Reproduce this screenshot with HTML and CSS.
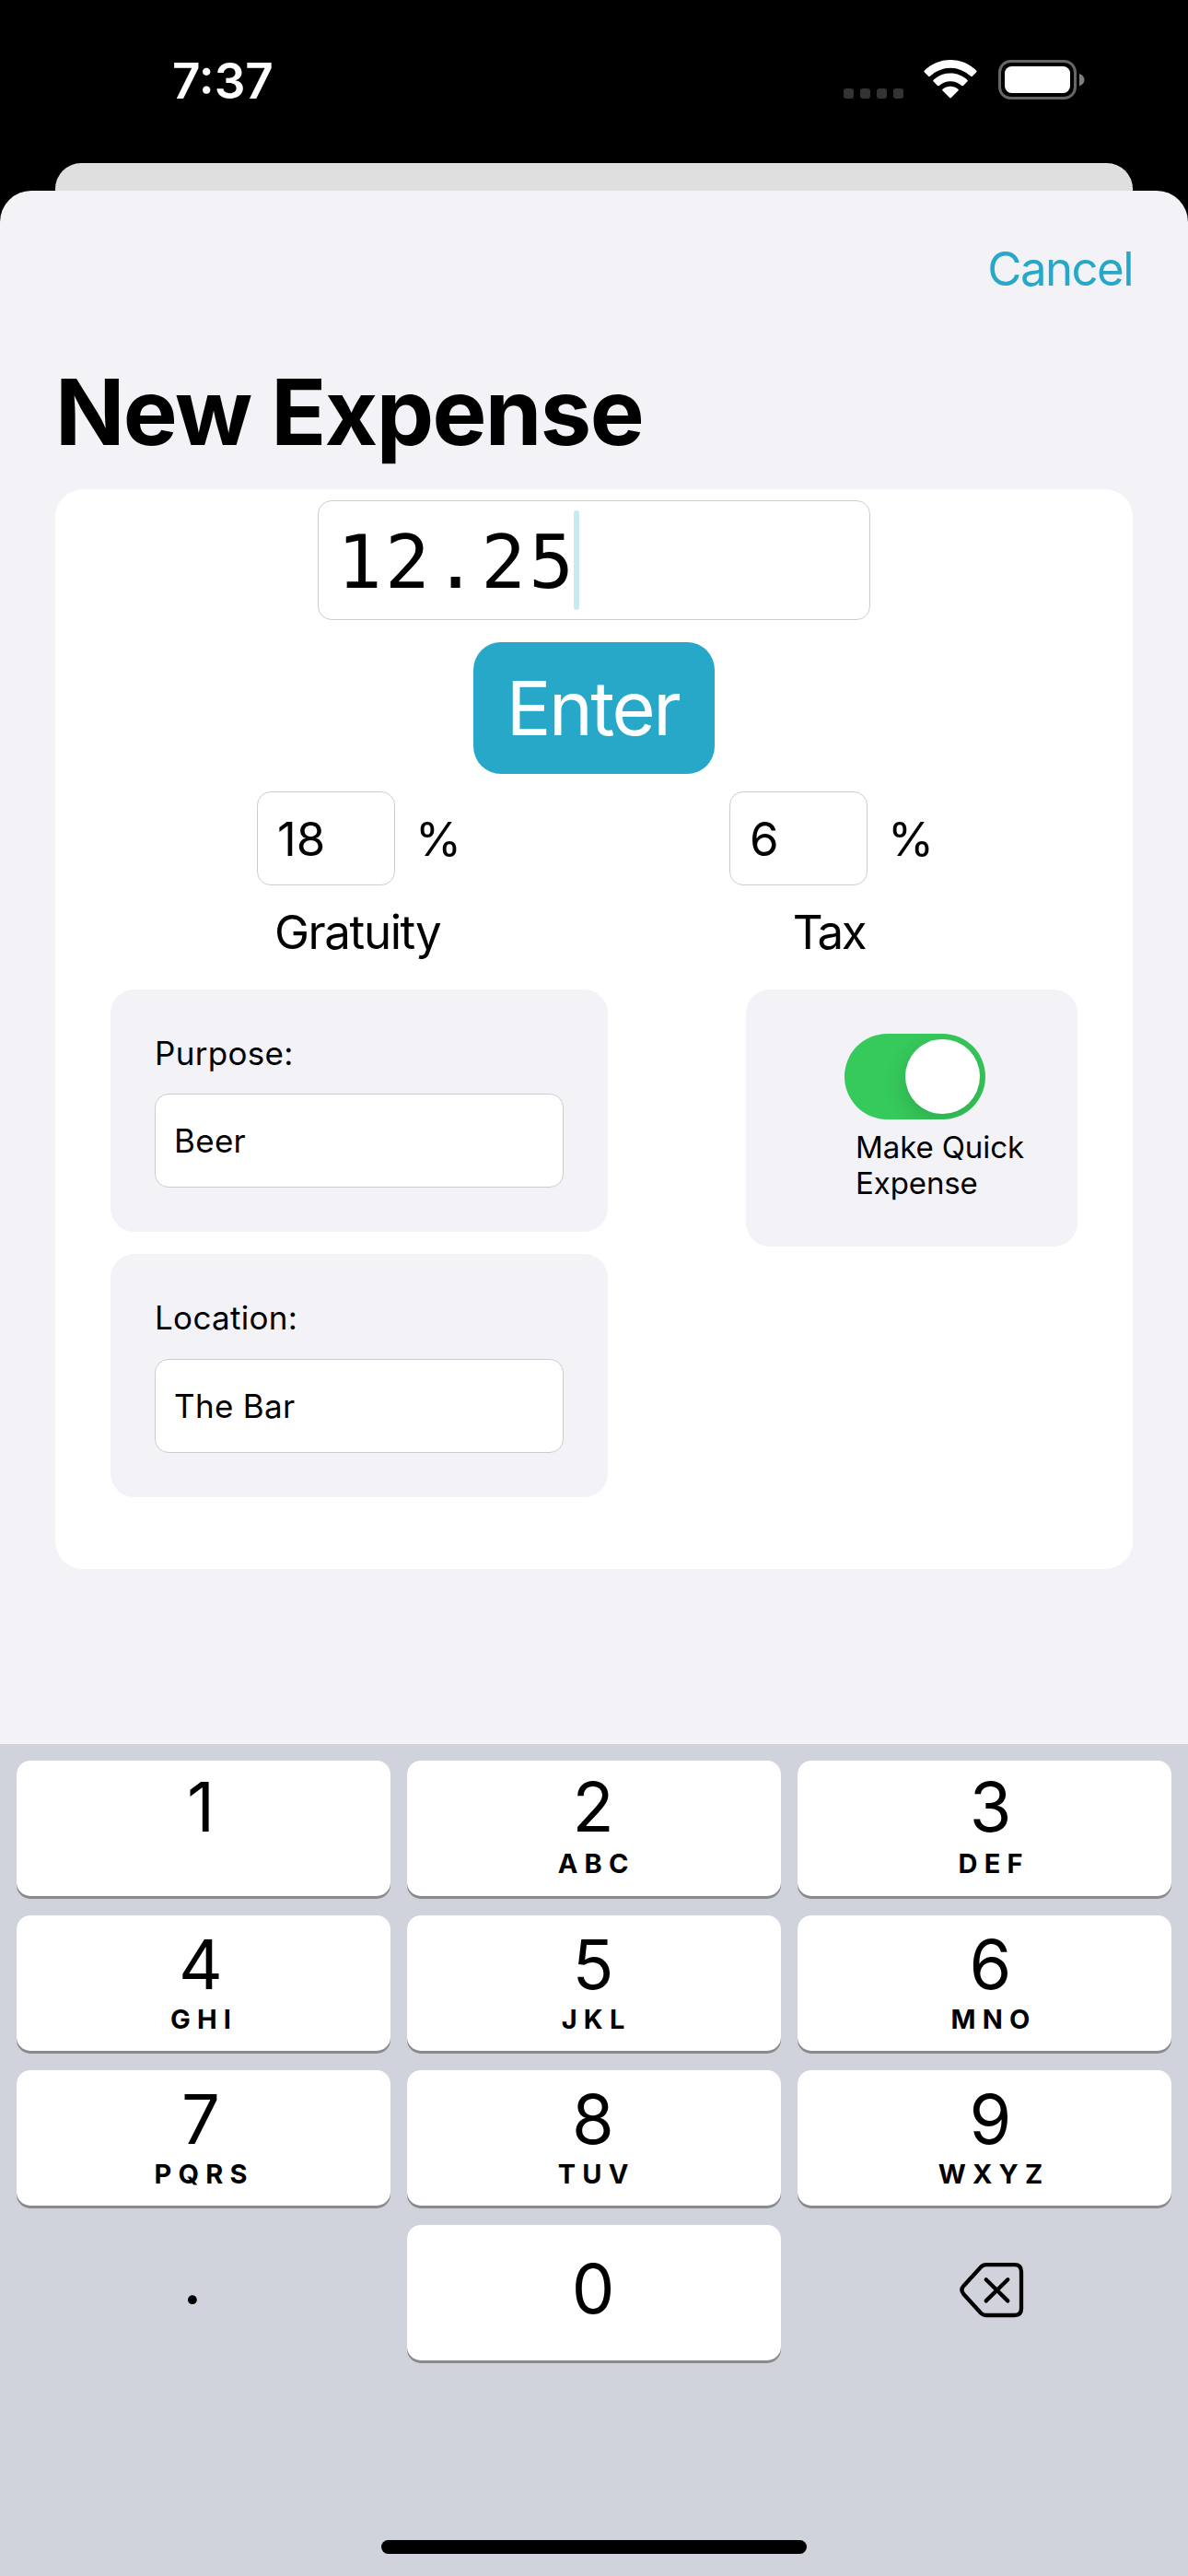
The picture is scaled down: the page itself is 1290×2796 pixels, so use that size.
FILE: index.html
```html
<!DOCTYPE html>
<html lang="en">
<head>
<meta charset="utf-8">
<title>New Expense</title>
<link rel="stylesheet" href="styles.css">
</head>
<body>
<div class="screen">
  <header class="status">
    <div class="time">7:37</div>
    <div class="indicators">
      <div class="dots"><i></i><i></i><i></i><i></i></div>
      <svg class="wifi" width="58" height="42" viewBox="0 0 58 42" fill="#fff">
        <path d="M29 0C40 0 50 4.400 57.100 11.500a1.300 1.300 0 0 1 0 1.900L52.800 17.700a1.200 1.200 0 0 1-1.700 0A32 32 0 0 0 6.900 17.700a1.200 1.200 0 0 1-1.700 0L.9 13.400a1.300 1.300 0 0 1 0-1.900C8 4.400 18 0 29 0Z"/>
        <path d="M29 14.500c7 0 13.500 2.700 18.300 7.200a1.300 1.300 0 0 1 0 1.900L43 27.900a1.300 1.300 0 0 1-1.800 0 18 18 0 0 0-24.400 0 1.300 1.300 0 0 1-1.800 0l-4.300-4.300a1.300 1.300 0 0 1 0-1.900A26.700 26.700 0 0 1 29 14.500Z"/>
        <path d="M29 28.700c3.200 0 6.100 1.100 8.400 3a1.300 1.300 0 0 1 0 1.900l-7.500 7.500a1.300 1.300 0 0 1-1.800 0l-7.500-7.500a1.300 1.300 0 0 1 0-1.900c2.300-1.900 5.200-3 8.400-3Z"/>
      </svg>
      <svg class="battery" width="94" height="43" viewBox="0 0 94 43">
        <rect x="1.500" y="1.500" width="82" height="40" rx="12" fill="none" stroke="#666" stroke-width="3"/>
        <rect x="7" y="7" width="71" height="29" rx="7.500" fill="#fff"/>
        <path d="M88 15c3.500 1.300 5.500 3.800 5.500 6.700S91.500 27.100 88 28.500Z" fill="#808080"/>
      </svg>
    </div>
  </header>
  <div class="back-sheet"></div>
  <main class="sheet">
    <nav class="nav"><a class="cancel">Cancel</a></nav>
    <h1 class="title">New Expense</h1>
    <section class="card">
      <div class="field amount"><span class="value">12.25</span><i class="caret"></i></div>
      <button class="enter">Enter</button>
      <div class="rates">
        <div class="rate">
          <div class="rate-row"><div class="field pct">18</div><span class="sign">%</span></div>
          <div class="rate-name gratuity">Gratuity</div>
        </div>
        <div class="rate">
          <div class="rate-row"><div class="field pct">6</div><span class="sign">%</span></div>
          <div class="rate-name tax">Tax</div>
        </div>
      </div>
      <div class="details">
        <div class="texts">
          <div class="panel"><label class="label">Purpose:</label><div class="field entry">Beer</div></div>
          <div class="panel location"><label class="label">Location:</label><div class="field entry">The Bar</div></div>
        </div>
        <div class="panel quick">
          <div class="toggle"><i class="knob"></i></div>
          <div class="quick-name">Make Quick<br>Expense</div>
        </div>
      </div>
    </section>
  </main>
  <footer class="keyboard">
    <div class="keys">
      <div class="key first"><b>1</b></div>
      <div class="key first"><b>2</b><small>ABC</small></div>
      <div class="key first"><b>3</b><small>DEF</small></div>
      <div class="key"><b>4</b><small>GHI</small></div>
      <div class="key"><b>5</b><small>JKL</small></div>
      <div class="key"><b>6</b><small>MNO</small></div>
      <div class="key"><b>7</b><small>PQRS</small></div>
      <div class="key"><b>8</b><small>TUV</small></div>
      <div class="key"><b>9</b><small>WXYZ</small></div>
      <div class="key plain point"><b>.</b></div>
      <div class="key zero"><b>0</b></div>
      <div class="key plain del">
        <svg width="70" height="60" viewBox="0 0 70 60" fill="none" stroke="#000" stroke-width="4.300" stroke-linecap="round" stroke-linejoin="round">
          <path d="M29 2.200H59.500Q67 2.200 67 9.700V49.500Q67 57 59.500 57H29Q25.500 57 23 54.500L4.300 34Q.5 29.600 4.300 25.200L23 4.700Q25.500 2.200 29 2.200Z"/>
          <path d="M28.700 18.200L52.300 41.400M52.300 18.200L28.700 41.400"/>
        </svg>
      </div>
    </div>
    <div class="home"></div>
  </footer>
</div>
</body>
</html>
```
FILE: styles.css
```css
* { box-sizing: border-box; }
body { margin: 0; background: #000; font-family: Inter, "Liberation Sans", sans-serif; color: #000; }
.screen { width: 1290px; height: 2796px; display: flex; flex-direction: column; overflow: hidden; }
.status { height: 177px; display: flex; justify-content: space-between; padding: 0 112px 0 187px; color: #fff; }
.time { font-size: 53px; line-height: 60px; font-weight: 600; margin-top: 58px; letter-spacing: 0; }
.indicators { display: flex; align-items: flex-start; padding-top: 65px; }
.dots { display: flex; gap: 7px; margin: 31px 22px 0 0; }
.dots i { width: 11px; height: 11px; border-radius: 3px; background: #333; }
.wifi { margin-right: 23px; }
.back-sheet { height: 30px; margin: 0 60px; background: #dfdfdf; border-radius: 28px 28px 0 0; }
.sheet { height: 1686px; flex: none; background: #f2f2f7; border-radius: 34px 34px 0 0; padding: 0 60px; }
.nav { display: flex; justify-content: flex-end; padding-top: 55px; }
.cancel { font-size: 51px; line-height: 60px; color: #27a8c8; letter-spacing: -1.6px; }
.title { margin: 65px 0 0; font-size: 99px; line-height: 120px; height: 144px; font-weight: 700; letter-spacing: -1.6px; }
.card { height: 1172px; background: #fff; border-radius: 30px; display: flex; flex-direction: column; align-items: center; padding-top: 12px; }
.field { background: #fff; border: 1px solid #cdcdcf; border-radius: 15px; display: flex; align-items: center; }
.amount { width: 600px; height: 130px; padding-left: 20px; font-family: "DejaVu Sans Mono", monospace; font-size: 81px; letter-spacing: 3.3px; }
.value { padding-top: 3px; margin-right: -3px; }
.caret { width: 6px; height: 108px; border-radius: 3px; background: #c8ebf1; }
.enter { margin-top: 24px; width: 262px; height: 143px; border: 0; border-radius: 30px; background: #27a8c8; color: #fff; font: 400 81px/100px Inter, sans-serif; letter-spacing: -2.5px; padding: 0 3px 0 0; }
.rates { width: 1170px; display: flex; justify-content: space-between; padding: 19px 216px 0 219px; height: 234px; }
.rate { display: flex; flex-direction: column; align-items: center; }
.rate-row { display: flex; align-items: center; gap: 22px; font-size: 51px; }
.pct { width: 150px; height: 102px; padding-left: 21px; letter-spacing: 0; }
.rate-name { margin-top: 21px; font-size: 51px; line-height: 60px; letter-spacing: -1.4px; padding-right: 4px; }
.rate-name.tax { letter-spacing: -2.4px; padding-right: 6px; }
.details { width: 1170px; padding: 0 60px; display: flex; justify-content: space-between; align-items: flex-start; }
.texts { display: flex; flex-direction: column; gap: 24px; }
.panel { background: #f2f2f7; border-radius: 26px; }
.texts .panel { width: 540px; height: 263px; padding: 48px 48px 0; font-size: 35px; }
.label { display: block; line-height: 42px; height: 65px; letter-spacing: 0.3px; }
.texts .location { height: 264px; }
.location .label { height: 66px; }
.entry { width: 444px; height: 102px; padding-left: 20px; letter-spacing: 0.3px; }
.quick { width: 360px; height: 279px; padding-top: 48px; }
.toggle { width: 153px; height: 93px; margin-left: 107px; border-radius: 47px; background: #36c95b; padding: 6px 6px 6px 66px; overflow: hidden; }
.knob { display: block; width: 81px; height: 81px; border-radius: 50%; background: #fff; box-shadow: 0 8px 24px rgba(0,0,0,.15); }
.quick-name { margin: 11px 0 0 119px; font-size: 33px; line-height: 39px; letter-spacing: -0.1px; white-space: nowrap; }
.keyboard { flex: 1; background: #d0d3db; padding: 18px 18px 0; display: flex; flex-direction: column; align-items: center; }
.keys { display: grid; grid-template-columns: repeat(3, 406px); grid-auto-rows: 147px; gap: 21px 18px; }
.key { background: #fff; border-radius: 15px; box-shadow: 0 3px 0 #898a8e; display: flex; flex-direction: column; align-items: center; padding: 8px 2px 0 0; }
.key:nth-child(3n+1) { padding-right: 6px; }
.key:nth-child(3n) { padding-left: 15px; }
.key.first { padding-top: 5px; }
.key b { font-weight: 400; font-size: 74px; line-height: 90px; height: 90px; }
.key small { font-size: 29px; line-height: 30px; font-weight: 700; letter-spacing: 7.2px; margin-right: -7.2px; }
.key.first small { margin-top: 2px; }
.key.plain { background: none; box-shadow: none; }
.key.zero { padding-top: 24px; }
.key.point { padding: 14px 24px 0 0; }
.key.del { padding: 41px 0 0 16px; }
.home { margin-top: 195px; width: 462px; height: 15px; border-radius: 8px; background: #000; }
```
